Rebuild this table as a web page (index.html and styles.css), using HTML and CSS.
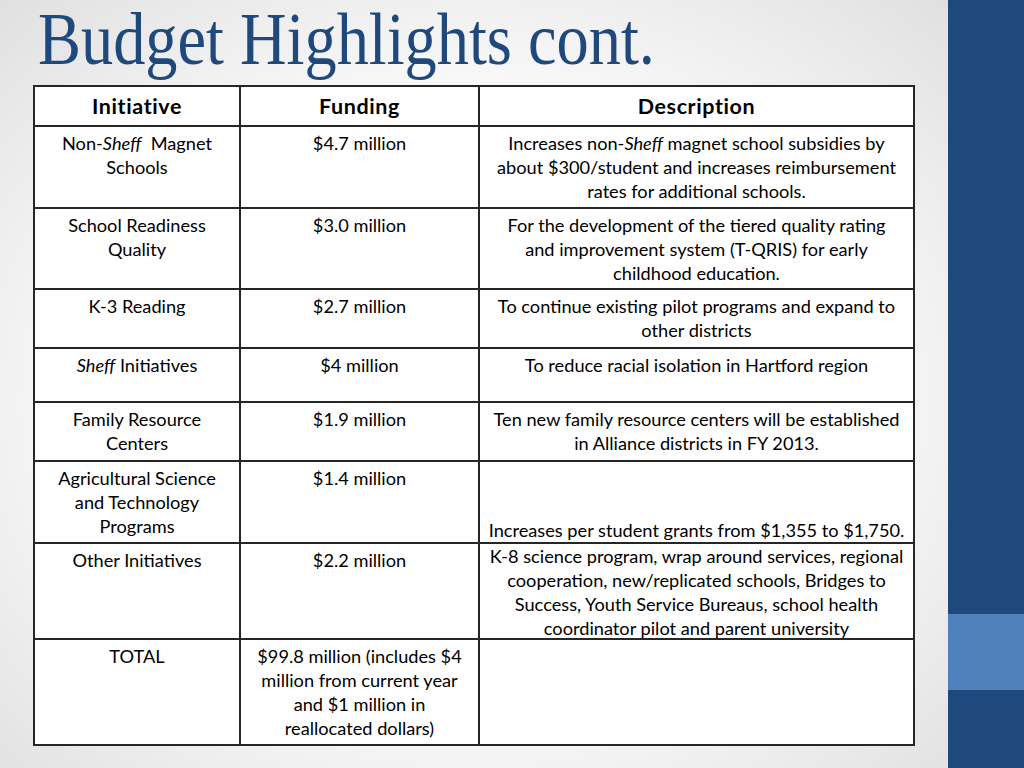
FILE: index.html
```html
<!DOCTYPE html>
<html>
<head>
<meta charset="utf-8">
<link rel="stylesheet" href="styles.css">
</head>
<body>
<div class="slide">
  <main class="content">
    <h1 class="title">Budget Highlights cont.</h1>
    <table class="budget">
      <colgroup><col class="c1"><col class="c2"><col class="c3"></colgroup>
      <thead>
        <tr class="h-head"><th>Initiative</th><th>Funding</th><th>Description</th></tr>
      </thead>
      <tbody>
        <tr class="h82"><td>Non-<i>Sheff</i>&nbsp; Magnet<br>Schools</td><td>$4.7 million</td><td>Increases non-<i>Sheff</i> magnet school subsidies by<br>about $300/student and increases reimbursement<br>rates for additional schools.</td></tr>
        <tr class="h81"><td>School Readiness<br>Quality</td><td>$3.0 million</td><td>For the development of the tiered quality rating<br>and improvement system (T-QRIS) for early<br>childhood education.</td></tr>
        <tr class="h59"><td>K-3 Reading</td><td>$2.7 million</td><td>To continue existing pilot programs and expand to<br>other districts</td></tr>
        <tr class="h54"><td><i>Sheff</i> Initiatives</td><td>$4 million</td><td>To reduce racial isolation in Hartford region</td></tr>
        <tr class="h59"><td>Family Resource<br>Centers</td><td>$1.9 million</td><td>Ten new family resource centers will be established<br>in Alliance districts in FY 2013.</td></tr>
        <tr class="h82"><td>Agricultural Science<br>and Technology<br>Programs</td><td>$1.4 million</td><td class="bottom">Increases per student grants from $1,355 to $1,750.</td></tr>
        <tr class="h96"><td>Other Initiatives</td><td>$2.2 million</td><td class="tight"><div class="tight-box">K-8 science program, wrap around services, regional<br>cooperation, new/replicated schools, Bridges to<br>Success, Youth Service Bureaus, school health<br>coordinator pilot and parent university</div></td></tr>
        <tr class="h106"><td>TOTAL</td><td>$99.8 million (includes $4<br>million from current year<br>and $1 million in<br>reallocated dollars)</td><td></td></tr>
      </tbody>
    </table>
  </main>
  <aside class="bar">
    <div class="bar-top"></div>
    <div class="bar-accent"></div>
    <div class="bar-bottom"></div>
  </aside>
</div>
</body>
</html>
```

FILE: styles.css
```css
* { box-sizing: border-box; }
html, body { margin: 0; padding: 0; }
body { width: 1024px; height: 768px; overflow: hidden; }

.slide {
  display: flex;
  width: 1024px;
  height: 768px;
}

.content {
  width: 948px;
  height: 768px;
  background: radial-gradient(ellipse 72% 72% at 50% 52%, #ffffff 45%, #e0e0e0 100%);
  padding-left: 33px;
}

.title {
  margin: 0;
  height: 85px;
  padding-left: 5px;
  font-family: "Liberation Serif", serif;
  font-weight: normal;
  font-size: 74px;
  line-height: 78px;
  color: #1f497d;
  white-space: nowrap;
  transform: scaleX(0.87);
  transform-origin: 5px 0;
}

.budget {
  border-collapse: collapse;
  table-layout: fixed;
  width: 880px;
  background: #fff;
  font-family: "Lato", sans-serif;
  font-size: 18.2px;
  line-height: 24px;
  color: #000;
}
.c1 { width: 206px; }
.c2 { width: 239px; }
.c3 { width: 435px; }

.budget th, .budget td {
  border: 2px solid #262626;
  text-align: center;
  vertical-align: top;
  padding: 4px 4px 0;
  white-space: nowrap;
}
.budget th {
  font-weight: bold;
  font-size: 21.5px;
  letter-spacing: 0.6px;
  vertical-align: middle;
  padding: 0 4px;
}
.budget td.bottom { vertical-align: bottom; padding-bottom: 0; }
.budget td.tight { padding: 0 2px; }
.tight-box { height: 92px; }

.h-head { height: 40px; }
.h82 { height: 82px; }
.h81 { height: 81px; }
.h59 { height: 59px; }
.h54 { height: 54px; }
.h96 { height: 96px; }
.h106 { height: 106px; }

.bar {
  width: 76px;
  height: 768px;
  display: flex;
  flex-direction: column;
}
.bar-top { height: 614px; background: #1f497d; }
.bar-accent { height: 76px; background: #4f81bd; }
.bar-bottom { flex: 1; background: #1f497d; }
```
